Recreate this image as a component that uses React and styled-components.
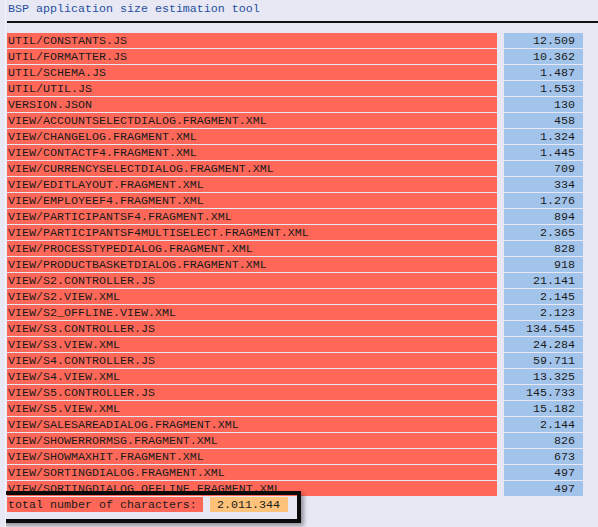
import styled, { createGlobalStyle } from 'styled-components'

const rows = [
  ['UTIL/CONSTANTS.JS', '12.509'],
  ['UTIL/FORMATTER.JS', '10.362'],
  ['UTIL/SCHEMA.JS', '1.487'],
  ['UTIL/UTIL.JS', '1.553'],
  ['VERSION.JSON', '130'],
  ['VIEW/ACCOUNTSELECTDIALOG.FRAGMENT.XML', '458'],
  ['VIEW/CHANGELOG.FRAGMENT.XML', '1.324'],
  ['VIEW/CONTACTF4.FRAGMENT.XML', '1.445'],
  ['VIEW/CURRENCYSELECTDIALOG.FRAGMENT.XML', '709'],
  ['VIEW/EDITLAYOUT.FRAGMENT.XML', '334'],
  ['VIEW/EMPLOYEEF4.FRAGMENT.XML', '1.276'],
  ['VIEW/PARTICIPANTSF4.FRAGMENT.XML', '894'],
  ['VIEW/PARTICIPANTSF4MULTISELECT.FRAGMENT.XML', '2.365'],
  ['VIEW/PROCESSTYPEDIALOG.FRAGMENT.XML', '828'],
  ['VIEW/PRODUCTBASKETDIALOG.FRAGMENT.XML', '918'],
  ['VIEW/S2.CONTROLLER.JS', '21.141'],
  ['VIEW/S2.VIEW.XML', '2.145'],
  ['VIEW/S2_OFFLINE.VIEW.XML', '2.123'],
  ['VIEW/S3.CONTROLLER.JS', '134.545'],
  ['VIEW/S3.VIEW.XML', '24.284'],
  ['VIEW/S4.CONTROLLER.JS', '59.711'],
  ['VIEW/S4.VIEW.XML', '13.325'],
  ['VIEW/S5.CONTROLLER.JS', '145.733'],
  ['VIEW/S5.VIEW.XML', '15.182'],
  ['VIEW/SALESAREADIALOG.FRAGMENT.XML', '2.144'],
  ['VIEW/SHOWERRORMSG.FRAGMENT.XML', '826'],
  ['VIEW/SHOWMAXHIT.FRAGMENT.XML', '673'],
  ['VIEW/SORTINGDIALOG.FRAGMENT.XML', '497'],
  ['VIEW/SORTINGDIALOG_OFFLINE.FRAGMENT.XML', '497'],
]

const GlobalStyle = createGlobalStyle`
  html, body {
    margin: 0;
    background: #e8e8f4;
    overflow: hidden;
  }
  body {
    font-family: "Liberation Mono", "Courier New", monospace;
    font-size: 11.67px;
    color: #1a1a1a;
  }
`

const App = () => (
  <>
    <GlobalStyle />
    <Screen>
      <Title>BSP application size estimation tool</Title>
      <Rule />
      <Table>
        {rows.map(([name, size]) => (
          <Row key={name}>
            <Cell tone="red">{name}</Cell>
            <Cell tone="blue" align="right">{size}</Cell>
          </Row>
        ))}
      </Table>
      <TotalBox>
        <Cell tone="red" width={196}>total number of characters:</Cell>
        <Cell tone="orange" align="right" width={78}>2.011.344</Cell>
      </TotalBox>
    </Screen>
  </>
)

export default App

const TONES = {
  red: '#ff6859',
  blue: '#a3c4ea',
  orange: '#ffc27a',
}

const Screen = styled.div`
  width: 593px;
  height: 527px;
  overflow: hidden;
  border-left: 1px solid #f4f4fa;
  margin-left: 5px;
  box-sizing: border-box;
`
const Title = styled.div`
  color: #1f4f9e;
  height: 16px;
  line-height: 16px;
  padding: 1px 0 0 2px;
`
const Rule = styled.div`
  height: 2px;
  background: #111;
  margin: 4px 0 0 1px;
`
const Table = styled.div`
  display: flex;
  flex-direction: column;
  gap: 1px;
  margin-top: 10px;
  padding-left: 1px;
`
const Row = styled.div`
  display: grid;
  grid-template-columns: 490px 79px;
  column-gap: 7px;
  height: 15px;
`
const Cell = styled.div`
  background: ${(p) => TONES[p.tone]};
  text-align: ${(p) => p.align || 'left'};
  width: ${(p) => (p.width ? `${p.width}px` : 'auto')};
  padding: ${(p) => (p.align === 'right' ? '0 8px 0 0' : '0 0 0 1px')};
  height: 15px;
  line-height: 16px;
  white-space: nowrap;
  overflow: hidden;
  box-sizing: border-box;
`
const TotalBox = styled.div`
  display: flex;
  gap: 7px;
  width: 290px;
  margin: -5px 0 0 -6px;
  padding: 2px 0 7px 3px;
  border: 4px solid #0a0a0a;
  box-shadow: 3px 3px 4px rgba(0, 0, 0, 0.35);
  position: relative;
`
